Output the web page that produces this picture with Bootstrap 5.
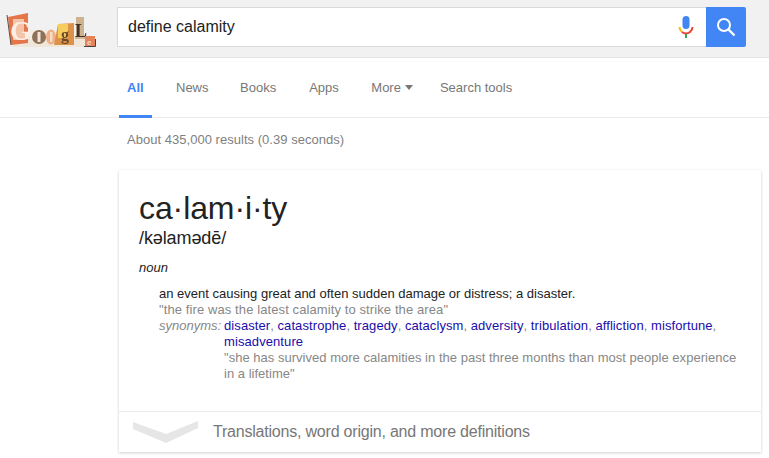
<!DOCTYPE html>
<html lang="en">
<head>
    <meta charset="UTF-8">
    <title>define calamity</title>
    <link rel="stylesheet" href="https://cdn.jsdelivr.net/npm/bootstrap@5.3.0/dist/css/bootstrap.min.css">
    <style>
        html, body { height: 458px; overflow: hidden; }
        body { background: #fff; font-family: "Liberation Sans", Arial, sans-serif; font-size: 13px; color: #222; }
        .top-head { height: 58px; background: #f1f1f1; border-bottom: 1px solid #e5e5e5; padding-top: 7px; }
        .logo-box { width: 117px; height: 40px; flex: none; }
        .search-wrap { width: 629px; height: 40px; }
        .search-field { height: 40px; border: 1px solid #d9d9d9; border-right: 0; background: #fff; font-size: 16px; color: #222; padding-left: 10px; }
        .search-btn { width: 40px; height: 40px; background: #4285f4; border-radius: 0 2px 2px 0; }
        .tabs { height: 60px; border-bottom: 1px solid #ebebeb; padding-left: 119px; font-size: 13px; }
        .tab-item { color: #777; text-decoration: none; height: 60px; line-height: 59px; }
        .tab-all { width: 33px; padding-left: 8px; color: #4285f4; font-weight: 700; border-bottom: 3px solid #4285f4; margin-right: 24px; }
        .tab-news { margin-right: 31.5px; }
        .tab-books { margin-right: 33px; }
        .tab-apps { margin-right: 32.5px; }
        .tab-more { margin-right: 27px; }
        .caret-down { display: inline-block; width: 0; height: 0; border: 4.5px solid transparent; border-top: 5px solid #777; border-bottom: 0; margin-left: 4px; vertical-align: 2px; }
        .result-stats { color: #808080; font-size: 13px; line-height: 16px; padding: 14px 0 0 127px; height: 52px; letter-spacing: .03px; }
        .dict-card { width: 642px; height: 282px; margin-left: 119px; background: #fff; border: 0; border-radius: 0; box-shadow: 0 1px 3px rgba(0,0,0,.2); }
        .dict-body { height: 241px; padding: 19px 20px 0 20px; }
        .word-title { font-size: 32px; line-height: 38px; color: #222; letter-spacing: -.1px; }
        .phonetic { font-size: 18px; line-height: 21px; color: #222; margin-top: 1px; letter-spacing: -.1px; }
        .word-type { font-style: italic; font-size: 13px; line-height: 16px; margin-top: 11px; color: #222; }
        .def-block { margin: 10px 0 0 20px; line-height: 16px; width: 580px; }
        .def-quote { color: #878787; letter-spacing: .1px; }
        .syn-label { width: 65px; flex: none; font-style: italic; color: #878787; }
        .syn-list { color: #878787; }
        .syn-list a { color: #1a0dab; text-decoration: none; letter-spacing: .09px; }
        .syn-list .def-quote { letter-spacing: .02px; }
        .dict-foot { height: 41px; border-top: 1px solid #ebebeb; padding-left: 14px; font-size: 16px; color: #777; letter-spacing: -.21px; }
        .foot-chev { width: 66px; height: 22px; flex: none; margin-right: 14px; }
    </style>
</head>
<body>
    <div class="top-head d-flex">
        <div class="logo-box">
            <svg width="117" height="40" viewBox="0 7 117 40">
                <defs><filter id="soft"><feGaussianBlur stdDeviation=".35"/></filter></defs>
                <g filter="url(#soft)">
                    <rect x="13" y="36" width="82" height="11" fill="#f0e6da"/>
                    <rect x="30" y="30" width="26" height="10" fill="#f5ece2"/>
                    <polygon points="8,17 28,13 28,43 11,45" fill="#e4764a"/>
                    <rect x="13" y="19" width="11" height="21" fill="#f4c4aa"/>
                    <path d="M7 15 L11 45" stroke="#5b4a44" stroke-width="1"/>
                    <text x="10" y="40" font-family="Liberation Serif" font-size="27" font-weight="700" fill="#fdeee4">G</text>
                    <ellipse cx="39" cy="37" rx="7" ry="7" fill="#8f7058"/>
                    <rect x="37.500" y="32" width="3" height="10" fill="#f0e4d8"/>
                    <ellipse cx="51" cy="37" rx="5" ry="7.500" fill="#eeb088"/>
                    <rect x="50" y="32" width="2.500" height="10" fill="#f7dcc4"/>
                    <polygon points="58,24 74,23 74,45 54,45" fill="#dc9248"/>
                    <rect x="58" y="24" width="10" height="14" fill="#f6cc5c"/>
                    <text x="61" y="40" font-family="Liberation Serif" font-size="16" font-weight="700" fill="#6b4a2a">g</text>
                    <rect x="76" y="17" width="8" height="22" fill="#cdb28f"/>
                    <rect x="75" y="36" width="13" height="3" fill="#d7b595"/>
                    <text x="75" y="37" font-family="Liberation Serif" font-size="18" font-weight="700" fill="#3f332b">L</text>
                    <rect x="85" y="36" width="10" height="10" fill="#e5845a"/>
                    <text x="87" y="45" font-family="Liberation Sans" font-size="8" font-weight="700" fill="#f6d9c4">e</text>
                </g>
                <path d="M95.500 39v7.500H84" fill="none" stroke="#4b3f46" stroke-width="1"/>
            </svg>
        </div>
        <div class="search-wrap d-flex">
            <div class="search-field flex-grow-1 d-flex align-items-center justify-content-between">
                <span>define calamity</span>
                <svg class="mic-icon" width="16" height="22" viewBox="0 0 16 22" style="margin-right:12px">
                    <rect x="4.500" y="0" width="7" height="13" rx="3.500" fill="#4285f4"/>
                    <path d="M1.500 11a6.500 6.500 0 0 0 2.500 5" fill="none" stroke="#fbbc05" stroke-width="2"/>
                    <path d="M4 16a6.500 6.500 0 0 0 8 0 6.500 6.500 0 0 0 2.500-5" fill="none" stroke="#ea4335" stroke-width="2"/>
                    <rect x="7" y="18" width="2" height="4" fill="#34a853"/>
                </svg>
            </div>
            <div class="search-btn d-flex align-items-center justify-content-center">
                <svg width="20" height="20" viewBox="0 0 20 20">
                    <circle cx="8" cy="8" r="6" fill="none" stroke="#fff" stroke-width="2"/>
                    <path d="M12.500 12.500l6 6" stroke="#fff" stroke-width="2.400"/>
                </svg>
            </div>
        </div>
    </div>

    <div class="tabs d-flex">
        <a href="#" class="tab-item tab-all">All</a>
        <a href="#" class="tab-item tab-news">News</a>
        <a href="#" class="tab-item tab-books">Books</a>
        <a href="#" class="tab-item tab-apps">Apps</a>
        <a href="#" class="tab-item tab-more">More<span class="caret-down"></span></a>
        <a href="#" class="tab-item">Search tools</a>
    </div>

    <div class="result-stats">About 435,000 results (0.39 seconds)</div>

    <div class="card dict-card">
        <div class="dict-body">
            <div class="word-title">ca·lam·i·ty</div>
            <div class="phonetic">/kəlamədē/</div>
            <div class="word-type">noun</div>
            <div class="def-block">
                <div>an event causing great and often sudden damage or distress; a disaster.</div>
                <div class="def-quote">"the fire was the latest calamity to strike the area"</div>
                <div class="d-flex">
                    <div class="syn-label">synonyms:</div>
                    <div class="syn-list">
                        <a href="#">disaster</a>, <a href="#">catastrophe</a>, <a href="#">tragedy</a>, <a href="#">cataclysm</a>, <a href="#">adversity</a>, <a href="#">tribulation</a>, <a href="#">affliction</a>, <a href="#">misfortune</a>, <a href="#">misadventure</a>
                        <div class="def-quote">"she has survived more calamities in the past three months than most people experience in a lifetime"</div>
                    </div>
                </div>
            </div>
        </div>
        <div class="dict-foot d-flex align-items-center">
            <svg class="foot-chev" viewBox="0 0 66 22"><polygon points="0,1 33,13 65,0 65,7 33,22 0,8" fill="#e6e6e6"/></svg>
            <span>Translations, word origin, and more definitions</span>
        </div>
    </div>

    <script src="https://cdn.jsdelivr.net/npm/bootstrap@5.3.0/dist/js/bootstrap.bundle.min.js"></script>
</body>
</html>
